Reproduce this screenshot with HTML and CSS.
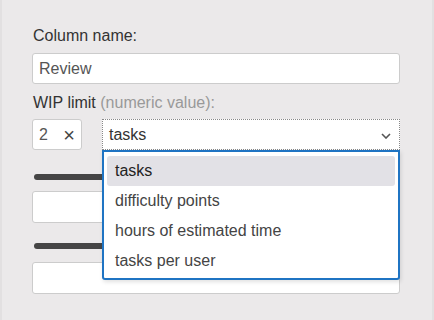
FILE: index.html
```html
<!DOCTYPE html>
<html lang="en">
<head>
  <meta charset="UTF-8">
  <title>Column settings</title>
  <link rel="stylesheet" href="styles.css">
</head>
<body>

  <div class="panel">
    <label class="field-label">Column name:</label>
    <div class="text-input">Review</div>

    <label class="field-label wip-label">WIP limit <span class="hint">(numeric value):</span></label>
    <div class="wip-row">
      <div class="number-input">
        <span>2</span>
        <span class="clear">&times;</span>
      </div>
      <div class="select-wrap">
        <div class="select focused">
          <span>tasks</span>
          <svg class="chevron" width="10" height="6" viewBox="0 0 10 6">
            <path d="M1 1 L5 5 L9 1" fill="none" stroke="#555" stroke-width="1.6"/>
          </svg>
        </div>
        <ul class="dropdown">
          <li class="active">tasks</li>
          <li>difficulty points</li>
          <li>hours of estimated time</li>
          <li>tasks per user</li>
        </ul>
      </div>
    </div>

    <div class="bar bar-first"></div>
    <div class="text-input below-bar"></div>

    <div class="bar"></div>
    <div class="text-input below-bar last"></div>
  </div>

</body>
</html>
```

FILE: styles.css
```css
body {
  margin: 0;
  font-family: "Liberation Sans", Arial, sans-serif;
  background-color: #ebe9ea;
}

.panel {
  height: 320px;
  box-sizing: border-box;
  padding: 26px 32px 0 30px;
  border-left: 2px solid #e2e0e1;
  border-right: 2px solid #e2e0e1;
}

.field-label {
  display: block;
  font-size: 16px;
  line-height: 20px;
  color: #333;
  padding-left: 1px;
}

.wip-label {
  margin-top: 9px;
}

.hint {
  color: #999;
}

.text-input {
  height: 29px;
  margin-top: 7px;
  background-color: white;
  border: 1px solid #ccc;
  border-radius: 3px;
  padding: 0 6px;
  font-size: 16px;
  line-height: 29px;
  color: #555;
}

.text-input.below-bar {
  height: 30px;
  margin-top: 11px;
}

.text-input.last {
  margin-top: 13px;
}

.wip-row {
  display: flex;
  gap: 20px;
  margin-top: 6px;
}

.number-input {
  width: 50px;
  box-sizing: border-box;
  height: 31px;
  display: flex;
  justify-content: space-between;
  align-items: center;
  padding: 0 6px 0 6px;
  background-color: white;
  border: 1px solid #ccc;
  border-radius: 3px;
  font-size: 16px;
  color: #555;
}

.clear {
  font-size: 20px;
  color: #444;
  line-height: 1;
}

.select-wrap {
  flex: 1;
  position: relative;
}

.select {
  height: 29px;
  display: flex;
  justify-content: space-between;
  align-items: center;
  padding: 0 8px 0 6px;
  background-color: white;
  border: 1px dotted #888;
  font-size: 16px;
  color: #333;
}

.chevron {
  margin-top: 2px;
}

.dropdown {
  position: absolute;
  top: 31px;
  left: 0;
  right: 0;
  margin: 0;
  padding: 4px 3px 2px;
  list-style: none;
  background-color: white;
  border: 2px solid #1f74c3;
  border-radius: 0 0 3px 3px;
  box-shadow: 1px 2px 4px rgba(0,0,0,0.12);
  z-index: 2;
}

.dropdown li {
  height: 30px;
  line-height: 30px;
  padding: 0 8px;
  font-size: 16px;
  color: #444;
  border-radius: 3px;
}

.dropdown li.active {
  background-color: #e2e1e6;
  color: #222;
}

.bar {
  height: 6px;
  width: 120px;
  margin: 20px 0 0 2px;
  background-color: #454545;
  border-radius: 3px;
}

.bar-first {
  margin-top: 24px;
}
```
